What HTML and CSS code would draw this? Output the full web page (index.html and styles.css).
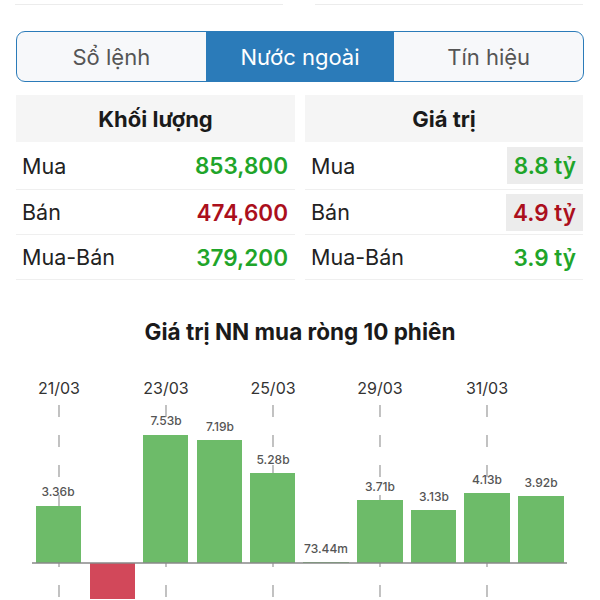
FILE: index.html
```html
<!DOCTYPE html>
<html lang="vi">
  <head>
    <meta charset="UTF-8" />
    <meta name="viewport" content="width=device-width, initial-scale=1.0" />
    <title>Nước ngoài</title>
    <link rel="stylesheet" href="styles.css">
  </head>
  <body>
    <div class="top-lines"><span></span><span></span></div>

    <div class="tabs">
      <div class="tab">Sổ lệnh</div>
      <div class="tab active">Nước ngoài</div>
      <div class="tab">Tín hiệu</div>
    </div>

    <div class="stats">
      <div class="col">
        <div class="col-head">Khối lượng</div>
        <div class="row"><span class="label">Mua</span><span class="val up">853,800</span></div>
        <div class="row"><span class="label">Bán</span><span class="val down">474,600</span></div>
        <div class="row"><span class="label">Mua-Bán</span><span class="val up">379,200</span></div>
      </div>
      <div class="col">
        <div class="col-head">Giá trị</div>
        <div class="row"><span class="label">Mua</span><span class="val up boxed">8.8 tỷ</span></div>
        <div class="row"><span class="label">Bán</span><span class="val down boxed">4.9 tỷ</span></div>
        <div class="row"><span class="label">Mua-Bán</span><span class="val up">3.9 tỷ</span></div>
      </div>
    </div>

    <h2 class="chart-title">Giá trị NN mua ròng 10 phiên</h2>

    <svg class="chart" width="600" height="240" viewBox="0 0 600 240">
      <!-- date guides -->
      <g class="dates">
        <text x="59" y="35">21/03</text>
        <text x="166" y="35">23/03</text>
        <text x="273" y="35">25/03</text>
        <text x="380" y="35">29/03</text>
        <text x="487" y="35">31/03</text>
      </g>
      <g class="guides">
        <line x1="59" y1="46" x2="59" y2="240" />
        <line x1="166" y1="46" x2="166" y2="240" />
        <line x1="273" y1="46" x2="273" y2="240" />
        <line x1="380" y1="46" x2="380" y2="240" />
        <line x1="487" y1="46" x2="487" y2="240" />
      </g>

      <!-- bars -->
      <g class="bars">
        <rect class="pos" x="36" y="147" width="45" height="57" />
        <rect class="neg" x="90" y="204" width="45" height="40" />
        <rect class="pos" x="143" y="76" width="45" height="128" />
        <rect class="pos" x="197" y="81" width="45" height="123" />
        <rect class="pos" x="250" y="114" width="45" height="90" />
        <rect class="pos" x="303" y="203" width="46" height="1" />
        <rect class="pos" x="357" y="141" width="46" height="63" />
        <rect class="pos" x="411" y="151" width="45" height="53" />
        <rect class="pos" x="464" y="134" width="46" height="70" />
        <rect class="pos" x="518" y="137" width="46" height="67" />
      </g>

      <line class="zero" x1="32" y1="204" x2="567" y2="204" />

      <g class="values">
        <text x="58" y="137">3.36b</text>
        <text x="166" y="66">7.53b</text>
        <text x="220" y="72">7.19b</text>
        <text x="273" y="105">5.28b</text>
        <text x="326" y="194">73.44m</text>
        <text x="380" y="132">3.71b</text>
        <text x="434" y="142">3.13b</text>
        <text x="487" y="125">4.13b</text>
        <text x="541" y="128">3.92b</text>
      </g>
    </svg>
  </body>
</html>
```

FILE: styles.css
```css
body {
  font-family: Inter, "Noto Sans", sans-serif;
  background-color: #fff;
  color: #222;
  margin: 0;
  padding: 0;
  width: 600px;
  overflow: hidden;
}

.top-lines {
  display: flex;
  justify-content: space-between;
  padding: 4px 17px 0 15px;
}

.top-lines span {
  display: block;
  width: 268px;
  height: 1px;
  background-color: #ececec;
}

/* segmented tabs */
.tabs {
  display: flex;
  margin: 26px 16px 0;
  height: 49px;
  border: 1.5px solid #2b7bb9;
  border-radius: 9px;
  overflow: hidden;
  background-color: #f7f8fa;
}

.tab {
  flex: 1;
  display: flex;
  align-items: center;
  justify-content: center;
  font-size: 22px;
  color: #555;
}

.tab.active {
  background-color: #2b7bb9;
  color: #fff;
}

/* buy / sell tables */
.stats {
  display: grid;
  grid-template-columns: 279px 278px;
  gap: 10px;
  margin: 13px 17px 0 16px;
}

.col-head {
  height: 47px;
  display: flex;
  align-items: center;
  justify-content: center;
  background-color: #f5f5f5;
  font-size: 22px;
  font-weight: 700;
  color: #1a1a1a;
}

.row {
  display: flex;
  align-items: center;
  justify-content: space-between;
  height: 44px;
  border-bottom: 1px solid #efefef;
  padding-left: 6px;
  font-size: 21.5px;
}

.col-head + .row {
  height: 47px;
}

.label {
  color: #222;
}

.val {
  font-size: 22.5px;
  font-weight: 600;
  padding: 0 7px;
  height: 37px;
  display: flex;
  align-items: center;
}

.val.boxed {
  background-color: #ececec;
}

.up {
  color: #1fa52a;
}

.down {
  color: #ab0f1c;
}

/* chart */
.chart-title {
  margin: 39px 0 0;
  text-align: center;
  font-size: 22.5px;
  font-weight: 700;
  line-height: 26px;
  color: #1a1a1a;
}

.chart {
  display: block;
  margin-top: 14px;
}

.dates text {
  font-size: 16px;
  fill: #333;
  text-anchor: middle;
}

.guides line {
  stroke: #999;
  stroke-width: 1.2;
  stroke-dasharray: 12 18;
}

.bars .pos {
  fill: #6dbb69;
}

.bars .neg {
  fill: #d2485a;
}

.zero {
  stroke: #888;
  stroke-width: 1.5;
}

.values text {
  font-size: 12px;
  font-weight: 500;
  fill: #555;
  text-anchor: middle;
}
```
